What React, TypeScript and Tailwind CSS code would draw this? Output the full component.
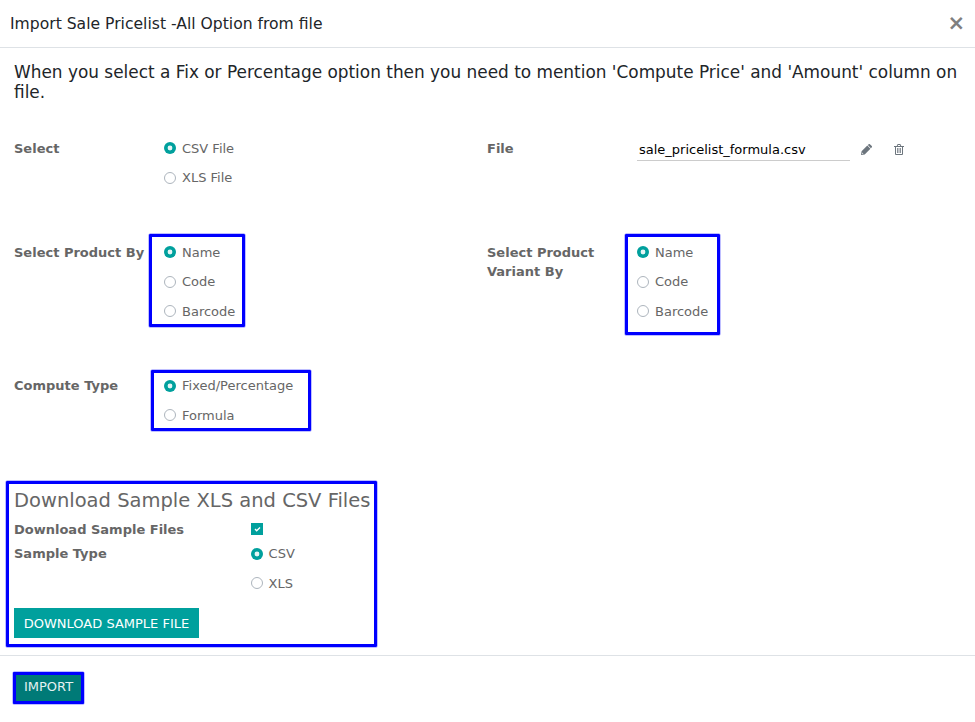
import type { ReactNode } from "react";

function Radio({ label, checked }: { label: string; checked?: boolean }) {
  return (
    <div className="flex h-[19.5px] items-start">
      {checked ? (
        <span className="mt-[3.25px] flex h-3 w-3 items-center justify-center rounded-full bg-[#00a09d]">
          <span className="h-1 w-1 rounded-full bg-[#e6f5f5] shadow-[0_0_0_0.4px_#e6f5f5]" />
        </span>
      ) : (
        <span className="mt-[3.25px] h-3 w-3 rounded-full border border-[#adb5bd]" />
      )}
      <span className="ml-1.5">{label}</span>
    </div>
  );
}

function Radios({ options }: { options: string[] }) {
  return (
    <div className="flex flex-col gap-[9.9px]">
      {options.map((o, i) => (
        <Radio key={o} label={o} checked={i === 0} />
      ))}
    </div>
  );
}

function Marked({ className, children }: { className: string; children: ReactNode }) {
  return (
    <div className={"shrink-0 rounded-[1px] border-[3px] border-[#0000ff] shadow-[0_0_0_0.5px_#8080ff] " + className}>
      {children}
    </div>
  );
}

export default function App() {
  return (
    <div className="flex h-[722px] w-[975px] flex-col overflow-hidden bg-white font-['DejaVu_Sans',sans-serif] text-[13px] leading-[19.5px] text-[#666666]">
      <header className="flex h-12 shrink-0 items-center justify-between border-b border-[#dee2e6] pr-[10px] pl-[10px] text-[#212529]">
        <h1 className="pt-[2px] text-[15.6px]">Import Sale Pricelist -All Option from file</h1>
        <span className="pb-[2px] text-[21px] leading-[20px] font-bold text-[#7f7f7f]">×</span>
      </header>
      <main className="flex h-[607px] shrink-0 flex-col pl-[14px]">
        <h3 className="mt-[14px] h-[40px] text-[16.92px] leading-[20px] text-[#212529]">
          When you select a Fix or Percentage option then you need to mention 'Compute Price' and 'Amount' column on file.
        </h3>
        <div className="mt-[37px] flex h-[95px] shrink-0">
          <b className="w-[150px]">Select</b>
          <div className="w-[323px]">
            <Radios options={["CSV File", "XLS File"]} />
          </div>
          <b className="w-[150px]">File</b>
          <div className="flex h-[22px] w-[213px] items-center border-b border-[#cccccc] pt-px pl-[2px] text-black">
            sale_pricelist_formula.csv
          </div>
          <svg className="mt-[5px] ml-[11px] h-[11px] w-[11px]" viewBox="0 0 11 11" fill="#6c757d">
            <path d="M0 11L.6 7.3L6.3 1.6L9.4 4.7L3.7 10.4ZM6.8 1.1L7.7 .2Q8.3-.3 8.9 .2L10.8 2.1Q11.3 2.7 10.8 3.3L9.9 4.2Z" />
            <path d="M1.3 8.6L2.4 9.7L1.5 9.9L1.1 9.5Z" fill="white" />
          </svg>
          <svg className="mt-[5px] ml-[22px] h-[11px] w-[10px]" viewBox="0 0 10 11" fill="none" stroke="#6c757d">
            <path d="M0 2.5h10M3.2 2.2L3.7.5h2.6L6.8 2.2M1.5 2.5v8h7v-8" />
            <path d="M3.5 4V9M5 4V9M6.5 4V9" strokeWidth=".8" />
          </svg>
        </div>
        <div className="flex h-[136px] shrink-0">
          <b className="mt-[9px] w-[135px] whitespace-nowrap">Select Product By</b>
          <Marked className="h-[93px] w-[96px] pt-[6px] pl-[12px]">
            <Radios options={["Name", "Code", "Barcode"]} />
          </Marked>
          <b className="mt-[9px] ml-[242px] w-[138px] leading-[19px]">
            Select Product
            <br />
            Variant By
          </b>
          <Marked className="h-[101px] w-[95px] pt-[6px] pl-[9px]">
            <Radios options={["Name", "Code", "Barcode"]} />
          </Marked>
        </div>
        <div className="flex h-[111px] shrink-0">
          <b className="mt-[6px] w-[137px]">Compute Type</b>
          <Marked className="h-[61px] w-[160px] pt-[3.3px] pl-[10px]">
            <Radios options={["Fixed/Percentage", "Formula"]} />
          </Marked>
        </div>
        <Marked className="-ml-[8px] flex h-[166px] w-[371px] flex-col pl-[5px]">
          <h2 className="mt-[5px] h-[24px] text-[19.5px] leading-[24px] whitespace-nowrap">Download Sample XLS and CSV Files</h2>
          <div className="mt-[7px] flex h-[24.3px]">
            <b className="w-[237px]">Download Sample Files</b>
            <span className="mt-[3px] flex h-3 w-3 items-center justify-center bg-[#00a09d]">
              <svg className="h-[5px] w-[7px]" viewBox="0 0 8 6" fill="none" stroke="white" strokeWidth="1.6">
                <path d="M1 2.5L3 4.5L7 .7" />
              </svg>
            </span>
          </div>
          <div className="flex">
            <b className="w-[236.6px]">Sample Type</b>
            <Radios options={["CSV", "XLS"]} />
          </div>
          <button className="mt-[14.8px] h-[30px] w-[185px] shrink-0 bg-[#00a09d] pt-[2px] text-white">DOWNLOAD SAMPLE FILE</button>
        </Marked>
      </main>
      <footer className="flex h-[67px] shrink-0 border-t border-[#dee2e6] pt-[16px] pl-[13px]">
        <Marked className="h-[32px] w-[71px] bg-[#007a77] text-center leading-[24px] text-[#e5f1f1]">IMPORT</Marked>
      </footer>
    </div>
  );
}
